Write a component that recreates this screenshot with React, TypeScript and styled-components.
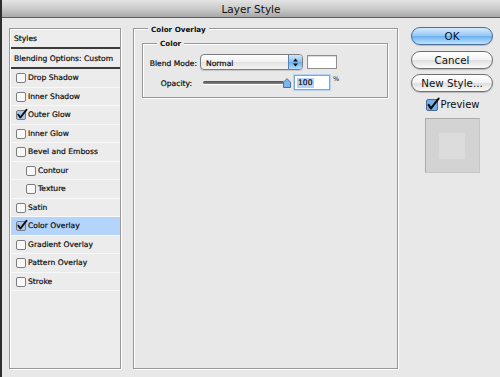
import React from "react";
import styled, { createGlobalStyle } from "styled-components";

const Global = createGlobalStyle`
  html, body { margin: 0; padding: 0; background: #e8e8e8; }
  body { font-family: "DejaVu Sans", "Liberation Sans", sans-serif; color: #0c0c0c; }
  * { box-sizing: border-box; }
`;

const Window = styled.div`
  width: 500px;
  height: 377px;
  border-left: 2px solid #2e2e2e;
  background: #e8e8e8;
  display: flex;
  flex-direction: column;
  overflow: hidden;
`;

const TitleBar = styled.div`
  height: 18px;
  flex: none;
  border-bottom: 1px solid #5c5c5c;
  background: linear-gradient(#e4e4e4, #c8c8c8 55%, #a8a8a8);
  display: flex;
  align-items: center;
  justify-content: center;
  font-size: 10.5px;
  color: #111;
`;

const Body = styled.div`
  display: flex;
  align-items: flex-start;
  padding: 10px 0 0 7px;
`;

const Etched = styled.div`
  border: 1px solid #989898;
  box-shadow: inset 1px 1px 0 #fff, 1px 1px 0 #fff;
`;

const StylesPanel = styled(Etched)`
  width: 112px;
  height: 341px;
  background: #ececec;
  padding: 1px 0 0 1px;
  display: flex;
  flex-direction: column;
`;

const SmallText = styled.span`
  font-size: 7.6px;
  -webkit-text-stroke: 0.2px #0c0c0c;
  white-space: nowrap;
`;

const HeaderRow = styled.div<{ $h: number }>`
  height: ${(p) => p.$h}px;
  flex: none;
  border-bottom: 2px solid #3c3c3c;
  padding-left: 3px;
  display: flex;
  align-items: center;
  background: #ededed;
`;

const EffectRow = styled.div<{ $indent: boolean; $selected: boolean }>`
  height: 18.5px;
  flex: none;
  border-bottom: 1px solid #f8f8f8;
  padding-left: ${(p) => (p.$indent ? 15 : 5)}px;
  display: flex;
  align-items: center;
  gap: 2px;
  background: ${(p) => (p.$selected ? "#b5d4fb" : "transparent")};
`;

const MainPanel = styled(Etched)`
  width: 265px;
  height: 341px;
  margin-left: 12px;
  padding: 0 9px 0 8px;
  display: flex;
  flex-direction: column;
  align-items: stretch;
`;

const Legend = styled.div<{ $top: number; $left: number }>`
  align-self: flex-start;
  margin-top: ${(p) => p.$top}px;
  margin-left: ${(p) => p.$left}px;
  padding: 0 3px;
  line-height: 10px;
  height: 10px;
  font-size: 7.2px;
  font-weight: bold;
  background: #e8e8e8;
`;

const Group = styled(Etched)`
  margin-top: 8px;
  height: 55px;
  display: flex;
  flex-direction: column;
`;

const FormRow = styled.div<{ $h: number; $top: number }>`
  display: flex;
  align-items: center;
  height: ${(p) => p.$h}px;
  margin-top: ${(p) => p.$top}px;
`;

const Label = styled.div<{ $pr: number }>`
  width: 54px;
  text-align: right;
  padding-right: ${(p) => p.$pr}px;
  line-height: 10px;
`;

const Select = styled.div`
  margin-left: 3px;
  width: 103px;
  height: 16px;
  border: 1px solid #7d7d7d;
  border-radius: 4px;
  background: linear-gradient(#fdfdfd, #f1f1f1 50%, #e2e2e2 51%, #f4f4f4);
  display: flex;
  align-items: center;
  overflow: hidden;
  box-shadow: 0 1px 1px rgba(0, 0, 0, 0.15);
`;

const SelectText = styled.div`
  flex: 1;
  padding-left: 5px;
  line-height: 10px;
`;

const Stepper = styled.div`
  width: 14px;
  height: 100%;
  border-left: 1px solid #5a7fb0;
  background: linear-gradient(#cfe6fb, #8cc0ef 50%, #6aaeee 51%, #b4dcff);
  display: flex;
  align-items: center;
  justify-content: center;
`;

const Swatch = styled.div`
  margin-left: 4px;
  width: 30px;
  height: 14px;
  background: #fff;
  border: 1px solid #8e8e8e;
  box-shadow: inset 0 1px 1px rgba(0, 0, 0, 0.15);
`;

const Slider = styled.div`
  margin-left: 6px;
  width: 88px;
  display: flex;
  align-items: center;
`;

const Track = styled.div`
  flex: 1;
  height: 3px;
  border-radius: 2px;
  background: linear-gradient(#4d4d4d, #8a8a8a);
  box-shadow: 0 1px 0 #fff;
`;

const Thumb = styled.svg`
  margin-left: -1px;
  flex: none;
`;

const NumberInput = styled.div`
  margin-left: 3px;
  width: 36px;
  height: 15px;
  background: #fff;
  border: 1px solid #7fa7d9;
  box-shadow: 0 0 0 1px #b5d1f2;
  display: flex;
  align-items: center;
  padding-left: 2px;
`;

const Highlight = styled.span`
  background: #b5d4fb;
  padding: 0 1px;
  line-height: 10px;
  display: flex;
`;

const Percent = styled.span`
  margin-left: 3px;
  font-size: 6.5px;
  align-self: flex-start;
`;

const RightColumn = styled.div`
  width: 82px;
  margin-left: 13px;
  margin-top: -1px;
  display: flex;
  flex-direction: column;
  align-items: center;
`;

const Buttons = styled.div`
  display: flex;
  flex-direction: column;
  gap: 5.5px;
  width: 100%;
`;

const AquaButton = styled.div<{ $default?: boolean }>`
  height: 18px;
  border-radius: 9px;
  border: 1px solid ${(p) => (p.$default ? "#4d6e99" : "#6f6f6f")};
  background: ${(p) =>
    p.$default
      ? "linear-gradient(#d6ebfe, #97c8f4 48%, #6cb1ef 52%, #bfe4ff)"
      : "linear-gradient(#ffffff, #f3f3f3 48%, #dedede 52%, #fbfbfb)"};
  box-shadow: 0 1px 1px rgba(0, 0, 0, 0.2);
  display: flex;
  align-items: center;
  justify-content: center;
  font-size: 10.3px;
  color: #111;
`;

const PreviewRow = styled.div`
  margin-top: 6px;
  display: flex;
  align-items: center;
  gap: 3px;
  font-size: 10px;
  margin-left: 1px;
`;

const PreviewBox = styled.div`
  margin-top: 7px;
  width: 55px;
  height: 55px;
  background: #d3d3d3;
  border: 1px solid;
  border-color: #a9a9a9 #c6c6c6 #c6c6c6 #a9a9a9;
  display: flex;
  align-items: center;
  justify-content: center;
`;

const PreviewInner = styled.div`
  width: 26px;
  height: 26px;
  background: #dcdcdc;
`;

const CheckSvg = styled.svg`
  overflow: visible;
  flex: none;
`;

function SmallCheck({ checked }: { checked: boolean }) {
  return (
    <CheckSvg width="10" height="11" viewBox="0 0 10 11">
      <rect
        x="0.5"
        y="1.5"
        width="9"
        height="9"
        rx="1.5"
        fill={checked ? "#a9c9ec" : "#fafafa"}
        stroke="#7c7c7c"
      />
      {checked && (
        <path
          d="M2.2 5.6 L4.3 8.6 L10.6 0.6"
          stroke="#111"
          strokeWidth="1.8"
          fill="none"
          strokeLinecap="round"
          strokeLinejoin="round"
        />
      )}
    </CheckSvg>
  );
}

function BigCheck() {
  return (
    <CheckSvg width="12" height="13" viewBox="0 0 12 13">
      <rect x="0.5" y="1.5" width="11" height="11" rx="1.5" fill="#76afec" stroke="#4a6c98" />
      <path
        d="M2.6 6.8 L5 10.4 L12.6 0.6"
        stroke="#0a0a0a"
        strokeWidth="2.1"
        fill="none"
        strokeLinecap="round"
        strokeLinejoin="round"
      />
    </CheckSvg>
  );
}

const effects: { name: string; checked: boolean; indent?: boolean; selected?: boolean }[] = [
  { name: "Drop Shadow", checked: false },
  { name: "Inner Shadow", checked: false },
  { name: "Outer Glow", checked: true },
  { name: "Inner Glow", checked: false },
  { name: "Bevel and Emboss", checked: false },
  { name: "Contour", checked: false, indent: true },
  { name: "Texture", checked: false, indent: true },
  { name: "Satin", checked: false },
  { name: "Color Overlay", checked: true, selected: true },
  { name: "Gradient Overlay", checked: false },
  { name: "Pattern Overlay", checked: false },
  { name: "Stroke", checked: false },
];

export default function App() {
  return (
    <>
      <Global />
      <Window>
        <TitleBar>Layer Style</TitleBar>
        <Body>
          <StylesPanel>
            <HeaderRow $h={19}>
              <SmallText>Styles</SmallText>
            </HeaderRow>
            <HeaderRow $h={20}>
              <SmallText>Blending Options: Custom</SmallText>
            </HeaderRow>
            {effects.map((e) => (
              <EffectRow key={e.name} $indent={!!e.indent} $selected={!!e.selected}>
                <SmallCheck checked={e.checked} />
                <SmallText>{e.name}</SmallText>
              </EffectRow>
            ))}
          </StylesPanel>

          <MainPanel>
            <Legend $top={-4} $left={6}>Color Overlay</Legend>
            <Group>
              <Legend $top={-5} $left={14}>Color</Legend>
              <FormRow $h={16} $top={5}>
                <Label $pr={0}>
                  <SmallText>Blend Mode:</SmallText>
                </Label>
                <Select>
                  <SelectText>
                    <SmallText>Normal</SmallText>
                  </SelectText>
                  <Stepper>
                    <svg width="5" height="9" viewBox="0 0 5 9">
                      <path d="M0 3.5 L2.5 0.5 L5 3.5 Z" fill="#111" />
                      <path d="M0 5.5 L2.5 8.5 L5 5.5 Z" fill="#111" />
                    </svg>
                  </Stepper>
                </Select>
                <Swatch />
              </FormRow>
              <FormRow $h={15} $top={5}>
                <Label $pr={5}>
                  <SmallText>Opacity:</SmallText>
                </Label>
                <Slider>
                  <Track />
                  <Thumb width="8" height="10" viewBox="0 0 8 10">
                    <path
                      d="M0.5 4.2 L4 0.6 L7.5 4.2 V9.5 H0.5 Z"
                      fill="#7fb5ea"
                      stroke="#3d6899"
                      strokeWidth="0.9"
                    />
                  </Thumb>
                </Slider>
                <NumberInput>
                  <Highlight>
                    <SmallText>100</SmallText>
                  </Highlight>
                </NumberInput>
                <Percent>%</Percent>
              </FormRow>
            </Group>
          </MainPanel>

          <RightColumn>
            <Buttons>
              <AquaButton $default>OK</AquaButton>
              <AquaButton>Cancel</AquaButton>
              <AquaButton>New Style...</AquaButton>
            </Buttons>
            <PreviewRow>
              <BigCheck />
              <span>Preview</span>
            </PreviewRow>
            <PreviewBox>
              <PreviewInner />
            </PreviewBox>
          </RightColumn>
        </Body>
      </Window>
    </>
  );
}
